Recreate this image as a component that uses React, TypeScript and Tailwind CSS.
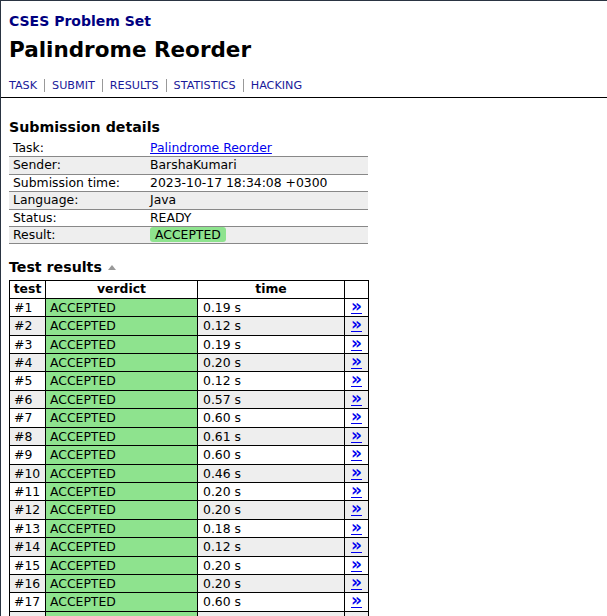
import React from "react";

const details: [string, React.ReactNode][] = [
  ["Task:", <a className="text-[#0000ee] underline" href="#">Palindrome Reorder</a>],
  ["Sender:", "BarshaKumari"],
  ["Submission time:", "2023-10-17 18:34:08 +0300"],
  ["Language:", "Java"],
  ["Status:", "READY"],
  ["Result:", <span className="inline-block bg-[#8ee38e] rounded-[3px] px-[5px] leading-[15px]">ACCEPTED</span>],
];

const times = ["0.19", "0.12", "0.19", "0.20", "0.12", "0.57", "0.60", "0.61", "0.60", "0.46", "0.20", "0.20", "0.18", "0.12", "0.20", "0.20", "0.60", "0.55"];

const nav = ["TASK", "SUBMIT", "RESULTS", "STATISTICS", "HACKING"];

export default function App() {
  return (
    <div
      className="min-h-[616px] w-[607px] overflow-hidden border-l border-t border-[#2a3442] bg-white text-black text-[12.4px]"
      style={{ fontFamily: '"DejaVu Sans", Verdana, sans-serif' }}
    >
      <div className="px-[8px] pt-[11px]">
        <div className="text-[14px] font-bold text-[#000080] leading-[18px]">CSES Problem Set</div>
        <h1 className="mt-[7px] text-[21.5px] font-bold leading-[26px]">Palindrome Reorder</h1>
        <div className="mt-[15px] flex items-center text-[11.2px] leading-[15px] text-[#1a1a9a]">
          {nav.map((n, i) => (
            <React.Fragment key={n}>
              {i > 0 && <span className="mx-[7px] h-[13px] w-px bg-[#999]" />}
              <a href="#">{n}</a>
            </React.Fragment>
          ))}
        </div>
      </div>
      <div className="mt-[4px] h-px bg-black" />
      <div className="px-[8px]">
        <h2 className="mt-[20px] text-[14.2px] font-bold leading-[18px]">Submission details</h2>
        <table className="mt-[4px] w-[359px] border-collapse">
          <tbody>
            {details.map(([k, v], i) => (
              <tr key={k} className={`border-b border-[#888] ${i % 2 === 1 ? "bg-[#eeeeee]" : "bg-white"}`}>
                <td className="w-[141px] py-0 pl-[4px] leading-[16.4px]">{k}</td>
                <td className="py-0 pl-0 leading-[16.4px]">{v}</td>
              </tr>
            ))}
          </tbody>
        </table>
        <h2 className="mt-[14px] flex items-center text-[14.2px] font-bold leading-[18px]">
          Test results
          <span className="ml-[6px] inline-block h-0 w-0 border-x-[4px] border-b-[5px] border-x-transparent border-b-[#999]" />
        </h2>
        <table className="mt-[4px] w-[360px] border-collapse border border-black">
          <thead>
            <tr>
              <th className="w-[36px] border border-black py-0 leading-[16.4px]">test</th>
              <th className="w-[152px] border border-black py-0 leading-[16.4px]">verdict</th>
              <th className="w-[147px] border border-black py-0 leading-[16.4px]">time</th>
              <th className="border border-black py-0 leading-[16.4px]"></th>
            </tr>
          </thead>
          <tbody>
            {times.map((t, i) => (
              <tr key={i} className={i % 2 === 1 ? "bg-[#eeeeee]" : "bg-white"}>
                <td className="h-[18.4px] border border-black py-0 pl-[4px] leading-[17.4px]">#{i + 1}</td>
                <td className="border border-black bg-[#8ee38e] py-0 pl-[4px] leading-[17.4px]">ACCEPTED</td>
                <td className="border border-black py-0 pl-[5px] leading-[17.4px]">{t} s</td>
                <td className="border border-black py-0 text-center leading-[17.4px]">
                  <a href="#" className="text-[17px] font-bold leading-[14px] text-[#0000ee] underline">»</a>
                </td>
              </tr>
            ))}
          </tbody>
        </table>
      </div>
    </div>
  );
}
